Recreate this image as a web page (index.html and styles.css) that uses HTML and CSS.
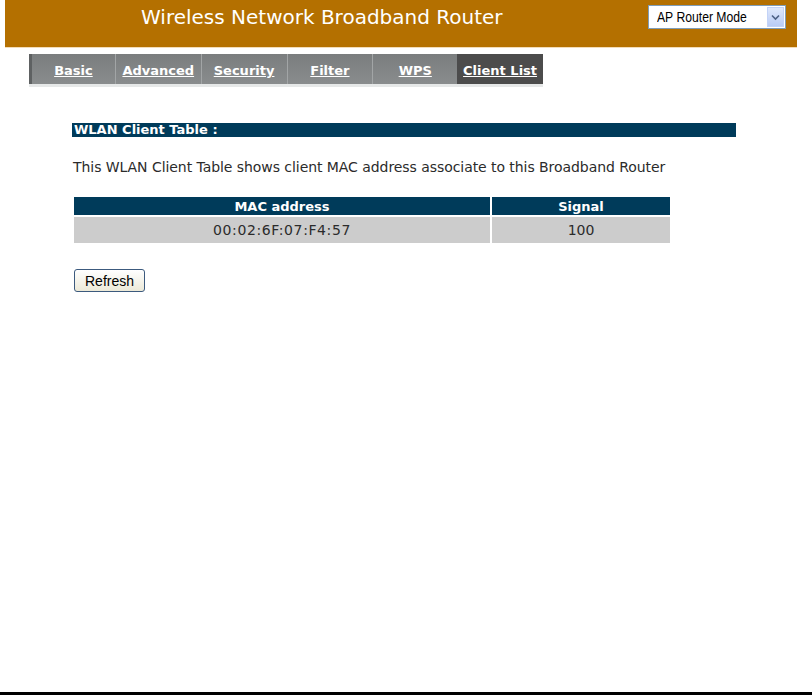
FILE: index.html
```html
<!DOCTYPE html>
<html>
<head>
<meta charset="utf-8">
<link rel="stylesheet" href="styles.css">
</head>
<body>
<div class="page">
  <header class="topbar">
    <div class="title">Wireless Network Broadband Router</div>
    <div class="mode-select">
      <span class="mode-text">AP Router Mode</span>
      <span class="mode-arrow"><svg width="9" height="7" viewBox="0 0 9 7"><path d="M1 1.5 L4.5 5 L8 1.5" fill="none" stroke="#4d6185" stroke-width="1.6"/></svg></span>
    </div>
  </header>
  <nav class="tabs">
    <a class="tab">Basic</a>
    <a class="tab">Advanced</a>
    <a class="tab">Security</a>
    <a class="tab">Filter</a>
    <a class="tab">WPS</a>
    <a class="tab active">Client List</a>
  </nav>
  <main class="content">
    <div class="section-title">WLAN Client Table :</div>
    <p class="desc">This WLAN Client Table shows client MAC address associate to this Broadband Router</p>
    <table class="clients">
      <thead>
        <tr><th class="col-mac">MAC address</th><th class="col-sig">Signal</th></tr>
      </thead>
      <tbody>
        <tr><td class="mac">00:02:6F:07:F4:57</td><td>100</td></tr>
      </tbody>
    </table>
    <button class="btn">Refresh</button>
  </main>
  <div class="spacer"></div>
  <div class="bottom-line"></div>
</div>
</body>
</html>
```
FILE: styles.css
```css
html, body {
  margin: 0;
  padding: 0;
  background: #ffffff;
}
.page {
  width: 812px;
  height: 695px;
  display: flex;
  flex-direction: column;
  font-family: "DejaVu Sans", Verdana, sans-serif;
}
.topbar {
  margin: 0 15px 0 5px;
  height: 47px;
  background: #b47000;
  border-bottom: 1px solid #f3dcb8;
  display: flex;
  align-items: flex-start;
  position: relative;
}
.title {
  position: absolute;
  left: 136px;
  top: 5px;
  color: #ffffff;
  font-size: 20px;
  white-space: nowrap;
}
.mode-select {
  margin: 5px 0 0 643px;
  width: 136px;
  height: 22px;
  border: 1px solid #7f9db9;
  background: #ffffff;
  display: flex;
  align-items: center;
  justify-content: space-between;
}
.mode-text {
  display: inline-block;
  font-family: "Liberation Sans", Arial, sans-serif;
  font-size: 14px;
  color: #000;
  margin-left: 8px;
  transform: scaleX(0.87);
  transform-origin: left center;
  white-space: nowrap;
}
.mode-arrow {
  width: 17px;
  height: 20px;
  margin-right: 1px;
  background: linear-gradient(#dfe8fb, #b9ccf6);
  border: 1px solid #c3d3f7;
  box-sizing: border-box;
  display: flex;
  align-items: center;
  justify-content: center;
}
.tabs {
  margin: 6px 0 0 29px;
  width: 514px;
  height: 30px;
  display: flex;
  background: linear-gradient(#7a7d7e, #898c8d);
  box-shadow: 0 3px 0 #e6e8e8;
}
.tab {
  width: 86px;
  height: 30px;
  display: flex;
  align-items: center;
  justify-content: center;
  color: #ffffff;
  font-weight: bold;
  font-size: 13px;
  text-decoration: underline;
  border-right: 1px solid #a2a5a6;
  box-sizing: border-box;
  padding-top: 3px;
}
.tab:first-child {
  border-left: 3px solid #5e6162;
  width: 87px;
}
.tab:nth-child(5) {
  border-right: none;
  width: 84px;
}
.tab.active {
  background: #4c4c4c;
  border-right: none;
  width: 86px;
}
.content {
  margin: 39px 0 0 72px;
  width: 664px;
}
.section-title {
  height: 14px;
  line-height: 14px;
  background: #003b5a;
  color: #ffffff;
  font-weight: bold;
  font-size: 13px;
  padding-left: 2px;
  overflow: hidden;
}
.desc {
  margin: 22px 0 0 1px;
  font-size: 14px;
  line-height: 17px;
  color: #2b2b2b;
  letter-spacing: -0.06px;
}
.clients {
  margin: 19px 0 0 0;
  border-collapse: separate;
  border-spacing: 2px;
  width: 600px;
}
.clients th {
  background: #003b5a;
  color: #ffffff;
  font-size: 13px;
  font-weight: bold;
  height: 18px;
  padding: 0;
  text-align: center;
}
.col-mac { width: 416px; }
.col-sig { width: 178px; }
.clients td {
  background: #cccccc;
  color: #2b2b2b;
  font-size: 14px;
  height: 26px;
  padding: 0;
  text-align: center;
}
.clients td.mac {
  letter-spacing: 0.6px;
}
.btn {
  display: block;
  margin: 24px 0 0 2px;
  width: 71px;
  height: 23px;
  font-family: "Liberation Sans", Arial, sans-serif;
  font-size: 14px;
  color: #000;
  background: linear-gradient(#ffffff, #ece9d8);
  border: 1px solid #3c5a7e;
  border-radius: 3px;
  padding: 0;
}
.spacer {
  flex: 1;
}
.bottom-line {
  height: 3px;
  background: #000;
}
```
